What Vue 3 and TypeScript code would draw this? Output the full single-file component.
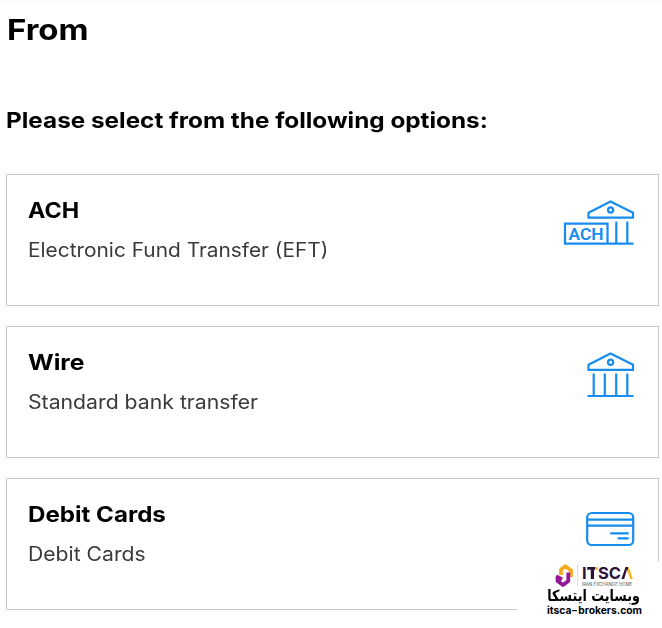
<script setup lang="ts">
interface Option {
  id: 'ach' | 'wire' | 'card'
  title: string
  description: string
}

const options: Option[] = [
  { id: 'ach', title: 'ACH', description: 'Electronic Fund Transfer (EFT)' },
  { id: 'wire', title: 'Wire', description: 'Standard bank transfer' },
  { id: 'card', title: 'Debit Cards', description: 'Debit Cards' },
]
</script>

<template>
  <main class="page">
    <h1 class="heading"><span>From</span></h1>
    <p class="prompt"><span>Please select from the following options:</span></p>
    <div class="options">
      <section v-for="option in options" :key="option.id" class="option">
        <div class="text" :class="option.id">
          <h2 class="title"><span>{{ option.title }}</span></h2>
          <p class="description"><span>{{ option.description }}</span></p>
        </div>
        <svg v-if="option.id === 'ach'" class="icon" width="72" height="50" viewBox="563 199 72 50">
          <path d="M588.5 212.7L610.5 201.5L633 212.7V217.7H588.5Z" />
          <circle cx="610.6" cy="210" r="2.6" />
          <path d="M633.5 243.7H565V223.7H607.5V243.7M616.3 221.5V243.7M627.3 221.5V243.7" />
          <text x="568.6" y="239.8" textLength="35" lengthAdjust="spacingAndGlyphs">ACH</text>
        </svg>
        <svg v-else-if="option.id === 'wire'" class="icon" width="72" height="50" viewBox="563 351 72 50">
          <path d="M588.5 364.7L610.5 353.5L633 364.7V369.8H588.5Z" />
          <circle cx="610.6" cy="362.2" r="2.6" />
          <path d="M587.5 396H633.5M593.7 373.5V396M604.8 373.5V396M616.2 373.5V396M627.3 373.5V396" />
        </svg>
        <svg v-else class="icon" width="72" height="50" viewBox="563 503 72 50">
          <rect x="587.2" y="513" width="46" height="32" rx="4.5" />
          <path d="M587 519.7H633M587 525.7H633M610.3 533.3H628.7M617.7 538.3H628.7" />
        </svg>
      </section>
    </div>

    <aside class="badge">
      <div class="brand">
        <svg class="mark" width="20" height="24" viewBox="555 564 20 24">
          <path d="M561 575V569.5L565.5 566.3L571 570.5V577" stroke="#f5ab1f" />
          <path d="M568.3 572.5V581L563 585L557.5 581V577L562 579.5" stroke="#94189a" />
        </svg>
        <div class="wordmark">
          <div class="name">I<b>T</b>SC<i>Λ</i></div>
          <div class="tagline">IRAN EXCHANGE HOME</div>
        </div>
      </div>
      <div class="persian" dir="rtl">وبسایت ایتسکا</div>
      <div class="domain">itsca<em>-</em>brokers.com</div>
    </aside>
  </main>
</template>

<style>
body { margin: 0; background: #fff; }
</style>

<style scoped>
.page {
  position: relative;
  box-sizing: border-box;
  width: 662px;
  height: 628px;
  padding: 10px 3px 0 6px;
  overflow: hidden;
  background: linear-gradient(#f8f8f8, #fff 4px);
  color: #000;
  font-family: Inter, sans-serif;
}
h1, h2, p { margin: 0; }
span { display: inline-block; transform-origin: left; white-space: nowrap; }
.heading { height: 40px; padding-left: 1px; font-size: 29px; line-height: 40px; font-weight: 700; }
.heading span { transform: scaleX(1.135); }
.prompt { margin-top: 54px; height: 32px; font-size: 21.5px; line-height: 32px; font-weight: 650; }
.prompt span { transform: scaleX(1.13); }
.options { margin-top: 38px; display: grid; gap: 20px; }
.option {
  box-sizing: border-box;
  height: 132px;
  display: flex;
  justify-content: space-between;
  padding: 20px 23px 0 21px;
  border: 1px solid #c8c8c8;
  background: #fff;
}
.title { height: 30px; font-size: 21.5px; line-height: 30px; font-weight: 700; }
.description { margin-top: 10px; height: 30px; font-size: 19.6px; line-height: 30px; font-weight: 400; color: #3a3a3a; }
.ach .title span { transform: scaleX(1.085); }
.ach .description span { transform: scaleX(1.065); }
.wire .title span { transform: scaleX(1.15); }
.wire .description span { transform: scaleX(1.083); }
.card .title span { transform: scaleX(1.122); }
.card .description span { transform: scaleX(1.08); }
.icon { margin-top: 4px; fill: none; stroke: #178cf0; stroke-width: 2.2; }
.icon text { fill: #178cf0; stroke: none; font: 600 16px Roboto, sans-serif; }
.badge {
  position: absolute;
  left: 517px;
  top: 561px;
  width: 145px;
  height: 67px;
  background: #fff;
}
.brand { display: flex; box-sizing: border-box; padding: 3px 0 0 38px; height: 28px; }
.mark { fill: none; stroke-width: 3.8; stroke-linejoin: round; }
.wordmark { height: 22px; margin-left: 2px; padding-left: 4px; border-left: 1px solid #ddd; }
.name { height: 18px; font: 700 16.5px/18px Inter, sans-serif; color: #2d1238; }
.name b { background: linear-gradient(90deg, #2d1238 72%, #f5b81d 72%); background-clip: text; color: transparent; }
.name i { font-style: normal; background: linear-gradient(90deg, #2d1238 55%, #f5b81d 55%); background-clip: text; color: transparent; }
.tagline { font: 4.4px/5px Inter, sans-serif; color: #555; white-space: nowrap; }
.persian {
  margin-left: 31px;
  width: 92px;
  height: 15px;
  font: 700 14px/15px "DejaVu Sans", sans-serif;
  white-space: nowrap;
  transform: scale(0.91, 1.1);
  transform-origin: right;
}
.domain { margin-left: 30px; font: 700 10.3px/13px Inter, sans-serif; white-space: nowrap; }
.domain em { display: inline-block; font-style: normal; transform: scaleX(1.35); margin: 0 1px; }
</style>
